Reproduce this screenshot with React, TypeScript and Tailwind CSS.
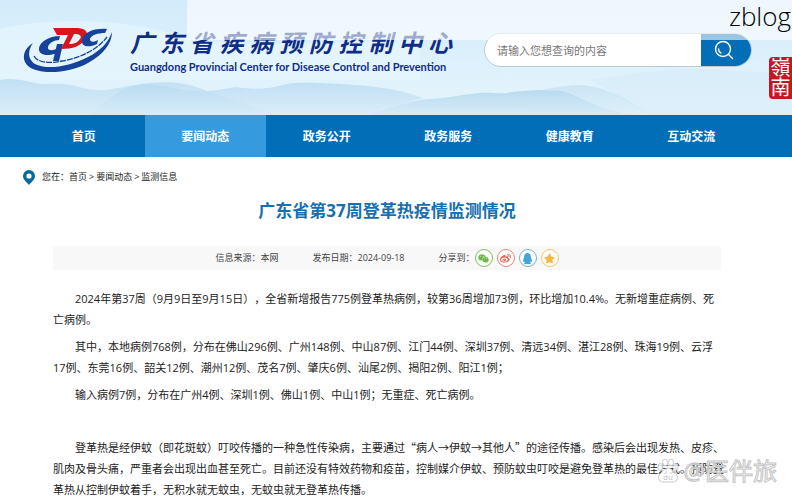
import React from 'react';
import { FaWeixin, FaWeibo, FaQq, FaStar } from 'react-icons/fa';

const NAV_ITEMS = ['首页', '要闻动态', '政务公开', '政务服务', '健康教育', '互动交流'];

const ACTIVE_NAV = '要闻动态';

const CRUMBS = ['首页', '要闻动态', '监测信息'];

const SHARE_LINKS = [
  { label: '微信', icon: FaWeixin, className: 'border-[#7cbf5a] text-[#6cb848]' },
  { label: '微博', icon: FaWeibo, className: 'border-[#e8877c] text-[#e2604f]' },
  { label: 'QQ', icon: FaQq, className: 'border-[#67b7dd] text-[#45a5d8]' },
  { label: 'QQ空间', icon: FaStar, className: 'border-[#f3c76b] text-[#f4b942]' },
];

function Logo() {
  return (
    <svg viewBox="0 0 90 46" className="h-[46px] w-[90px] shrink-0" aria-hidden="true">
      {/* outer swoosh */}
      <path d="M10 16C0 22-2 33 5 39c11 9 40 8 60-3 16-9 24-20 24-31-4 11-12 19-24 25-19 10-42 13-53 7C4 32 5 23 10 16Z" fill="#17429a" />
      <path d="M11 29c3 6 14 8 28 5 19-3 36-12 45-24" fill="none" stroke="#17429a" strokeWidth="1.3" strokeDasharray="6 1" />
      {/* C */}
      <path d="M37 9c-11 0-20 6-21 12-1 7 8 9 18 5l2-5c-6 3-12 3-11-1 1-4 6-7 11-7Z" fill="#17429a" />
      <path d="M34 17h6l-4 17h-6Z" fill="#17429a" />
      {/* D */}
      <path d="M30 1h25c9 1 11 5 7 11-4 7-12 10-24 10l7-14H34Zm21 6-5 10c6 0 9-2 11-5s0-5-6-5Z" fill="#d9141e" fillRule="evenodd" />
      {/* C */}
      <path d="M84 2C70 1 60 6 59 13c-1 7 7 8 15 4l1-4c-5 3-8 2-8-1 1-4 8-6 15-6Z" fill="#17429a" />
    </svg>
  );
}

function Mountains() {
  return (
    <svg viewBox="0 0 792 115" preserveAspectRatio="none" className="absolute inset-0 h-full w-full" aria-hidden="true">
      <defs>
        <linearGradient id="ridge" x1="0" y1="0" x2="0" y2="1">
          <stop offset="0" stopColor="#b3d8ef" />
          <stop offset="1" stopColor="#d6ebf7" />
        </linearGradient>
      </defs>
      <path d="M0 29C40 20 110 14 187 38 260 50 330 40 420 40V80H0Z" fill="#e8f6fd" opacity=".6" />
      <path d="M0 80c20-4 30 5 50 4 28-2 36 10 62 5 24-4 60-14 95 2l70 24H0Z" fill="url(#ridge)" opacity=".7" />
      <path d="M90 115C120 84 140 82 165 86c30 8 50 5 70 1 20 3 35 2 52-3 10-3 60 0 80 2 30 3 45 8 56 12l-60 17Z" fill="url(#ridge)" opacity=".7" />
      <path d="M365 115c40-12 50-15 65-16 20-1 35-5 50-6s20 2 32-1c8-1 25-3 50-1 15 3 35 20 75 24Z" fill="url(#ridge)" opacity=".9" />
      <path d="M528 91c18 0 30-6 52-6 20 1 45 10 70 30H528Z" fill="url(#ridge)" opacity=".5" />
      <path d="M590 79c40-4 80-12 120-10 30 2 50 4 82 3v43H650Z" fill="#c9e4f4" opacity=".3" />
    </svg>
  );
}

function SearchBox() {
  return (
    <form className="flex h-[34px] w-[268px] overflow-hidden rounded-full border border-[#b9ccd6] bg-white" onSubmit={(e) => e.preventDefault()}>
      <input
        type="text"
        aria-label="搜索"
        placeholder="请输入您想查询的内容"
        className="min-w-0 flex-1 px-3 pt-0.5 text-[11px] text-gray-700 outline-none placeholder:text-[#777]"
      />
      <button type="submit" aria-label="查询" className="flex w-[50px] items-center justify-center bg-[#036eb8] pr-1 text-white">
        <svg viewBox="0 0 20 20" className="size-5" fill="none" stroke="currentColor" strokeWidth="1.4" strokeLinecap="round" aria-hidden="true">
          <circle cx="9" cy="9" r="7.5" />
          <path d="M4.5 9A4.5 4.5 0 0 0 7 13M14.5 14.5l4 4" />
        </svg>
      </button>
    </form>
  );
}

function Header() {
  return (
    <header className="relative flex h-[115px] items-start justify-between overflow-hidden bg-linear-to-b from-[#d3ebfb] to-[#e6f5fc] pr-10 pl-[23px]">
      <Mountains />
      <a href="#" className="relative mt-[27px] flex gap-[17px]">
        <Logo />
        <div className="w-[322px]">
          <h1 className="text-[24px] leading-8 font-bold text-[#102d86] italic [text-align-last:justify]">广东省疾病预防控制中心</h1>
          <p className="font-[Lato] text-[11px] leading-4 font-bold whitespace-nowrap text-[#102d86]">
            Guangdong Provincial Center for Disease Control and Prevention
          </p>
        </div>
      </a>
      <div className="relative mt-[33px]">
        <SearchBox />
      </div>
      <div className="absolute top-[57px] right-0 w-[23px] rounded-l-sm bg-[#c9151e] py-px text-center text-[20px] leading-5 text-white">嶺南</div>
      <div className="absolute top-0 right-0 left-[187px] h-10 bg-white/60" />
      <span className="absolute top-0 right-px font-['Open_Sans'] text-[26px] leading-8 font-light text-black">zblog</span>
    </header>
  );
}

function NavBar() {
  return (
    <nav className="flex h-[42px] bg-[#036eb8] pr-10 pl-[23px]">
      {NAV_ITEMS.map((item) => (
        <a
          key={item}
          href="#"
          className={`flex flex-1 items-center justify-center pt-0.5 text-xs font-bold text-white ${item === ACTIVE_NAV ? 'bg-[#369ade]' : ''}`}
        >
          {item}
        </a>
      ))}
    </nav>
  );
}

function Breadcrumb() {
  return (
    <div className="flex h-10 items-center gap-[7px] pl-[23px] text-[9px] text-[#222]">
      <svg viewBox="0 0 12 15" className="h-[15px] w-3" aria-hidden="true">
        <path d="M6 0a6 6 0 0 0-6 6c0 4 4 6 6 9 2-3 6-5 6-9a6 6 0 0 0-6-6Zm0 3.4a2.6 2.6 0 1 1 0 5.2 2.6 2.6 0 0 1 0-5.2Z" fill="#0b6a9c" fillRule="evenodd" />
      </svg>
      <p>
        您在：
        {CRUMBS.map((crumb, i) => (
          <React.Fragment key={crumb}>
            {i > 0 && <span className="mx-0.5">&gt;</span>}
            <a href="#">{crumb}</a>
          </React.Fragment>
        ))}
      </p>
    </div>
  );
}

function MetaBar() {
  return (
    <div className="flex h-6 items-center justify-center gap-[34px] bg-[#f8f8f8] text-[9px] text-[#444]">
      <span>信息来源：本网</span>
      <span>发布日期：2024-09-18</span>
      <div className="flex items-center">
        <span>分享到：</span>
        <div className="flex gap-1">
          {SHARE_LINKS.map(({ label, icon: Icon, className }) => (
            <a key={label} href="#" aria-label={label} className={`flex size-[18px] items-center justify-center rounded-full border bg-white ${className}`}>
              <Icon className="size-[11px]" />
            </a>
          ))}
        </div>
      </div>
    </div>
  );
}

function Watermark() {
  return (
    <div className="pointer-events-none absolute right-[15px] bottom-[15px] flex items-center gap-1">
      <svg viewBox="0 0 22 26" className="h-[26px] w-[22px]" fill="#fff" fillOpacity=".8" stroke="#bbb" strokeWidth=".8" aria-hidden="true">
        <ellipse cx="3.5" cy="9" rx="2.5" ry="3.5" />
        <ellipse cx="8" cy="4.5" rx="2.5" ry="3.5" />
        <ellipse cx="14" cy="4.5" rx="2.5" ry="3.5" />
        <ellipse cx="18.5" cy="9" rx="2.5" ry="3.5" />
        <path d="M11 10c-3 0-4 3-7 5-4 3-3 9 2 9h10c5 0 6-6 2-9-3-2-4-5-7-5Z" />
        <text x="11" y="22" textAnchor="middle" fontSize="8" fontFamily="Open Sans" fill="#aaa" stroke="none">du</text>
      </svg>
      <span className="text-[24px] leading-7 text-white/70 [-webkit-text-stroke:1px_#c4c4c4]">@医伴旅</span>
    </div>
  );
}

export default function App() {
  return (
    <div className="relative min-h-screen overflow-hidden bg-white font-['Open_Sans','Noto_Sans_CJK_SC',sans-serif]">
      <Header />
      <NavBar />
      <Breadcrumb />
      <main className="pr-[71px] pl-[53px]">
        <h2 className="mb-[21px] text-center text-[17px] leading-7 font-bold text-[#166fae]">广东省第37周登革热疫情监测情况</h2>
        <MetaBar />
        <article className="mt-[18px] flex flex-col gap-1.5 text-[11px] leading-[21px] text-[#222]">
          <p className="indent-[2em] [text-spacing-trim:space-all]">
            2024年第37周（9月9日至9月15日），全省新增报告775例登革热病例，较第36周增加73例，环比增加10.4%。无新增重症病例、死亡病例。
          </p>
          <p className="indent-[2em]">
            其中，本地病例768例，分布在佛山296例、广州148例、中山87例、江门44例、深圳37例、清远34例、湛江28例、珠海19例、云浮17例、东莞16例、韶关12例、潮州12例、茂名7例、肇庆6例、汕尾2例、揭阳2例、阳江1例；
          </p>
          <p className="indent-[2em]">输入病例7例，分布在广州4例、深圳1例、佛山1例、中山1例；无重症、死亡病例。</p>
          <p className="mt-[26px] -mr-1 indent-[2em]">
            登革热是经伊蚊（即花斑蚊）叮咬传播的一种急性传染病，主要通过<span className="font-['Noto_Sans_CJK_SC']">“</span>病人→伊蚊→其他人<span className="font-['Noto_Sans_CJK_SC']">”</span>的途径传播。感染后会出现发热、皮疹、肌肉及骨头痛，严重者会出现出血甚至死亡。目前还没有特效药物和疫苗，控制媒介伊蚊、预防蚊虫叮咬是避免登革热的最佳方式。预防登革热从控制伊蚊着手，无积水就无蚊虫，无蚊虫就无登革热传播。
          </p>
        </article>
      </main>
      <Watermark />
    </div>
  );
}
